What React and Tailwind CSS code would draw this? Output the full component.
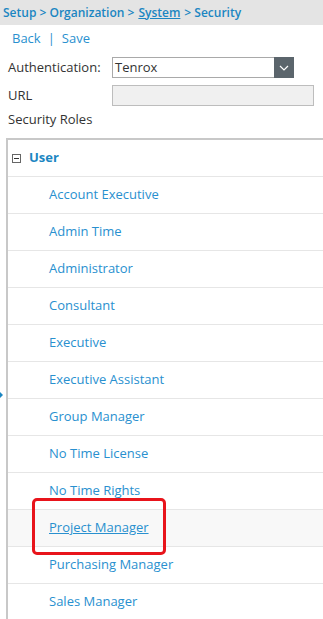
const roles = [
  'Account Executive',
  'Admin Time',
  'Administrator',
  'Consultant',
  'Executive',
  'Executive Assistant',
  'Group Manager',
  'No Time License',
  'No Time Rights',
  'Project Manager',
  'Purchasing Manager',
  'Sales Manager',
]

function RoleRow({ name }) {
  const active = name === 'Project Manager'
  return (
    <div
      className={`relative h-[37px] border-b border-[#e6e6e6] flex items-center pl-[41px] ${
        active ? 'bg-[#f8f8f8]' : 'bg-white'
      }`}
    >
      <span className={`text-[13px] text-[#2990cf] ${active ? 'underline' : ''}`}>{name}</span>
      {active && (
        <div className="absolute z-10 left-[24px] top-[-12px] w-[134px] h-[57px] border-[3px] border-[#e8141b] rounded-[5px]" />
      )}
    </div>
  )
}

export default function App() {
  return (
    <div className="relative w-full h-[619px] overflow-hidden bg-white font-['Open_Sans',sans-serif] text-[#333]">
      <div className="h-[25px] bg-[#e4e4e4] flex items-center px-[3px] text-[12px] font-semibold text-[#1b86c2]">
        Setup &gt; Organization &gt; <span className="underline mx-[4px]">System</span> &gt; Security
      </div>

      <div className="mt-[5px] h-[18px] flex items-center pl-[12px] text-[13px] text-[#2990cf]">
        <span>Back</span>
        <span className="mx-[7px]">|</span>
        <span>Save</span>
      </div>

      <div className="mt-[9px] flex items-center pl-2 text-[13px]">
        <span className="w-[104px]">Authentication:</span>
        <div className="w-[182px] h-[21px] border border-[#a9a9a9] flex items-center bg-white">
          <span className="flex-1 pl-[2px]">Tenrox</span>
          <div className="w-[20px] h-[21px] -mr-px bg-[#5b656c] flex items-center justify-center">
            <svg width="10" height="6" viewBox="0 0 10 6" fill="none">
              <path d="M1 1l4 4 4-4" stroke="#fff" strokeWidth="1.2" />
            </svg>
          </div>
        </div>
      </div>

      <div className="mt-[7px] flex items-center pl-2 text-[13px]">
        <span className="w-[104px]">URL</span>
        <div className="w-[202px] h-[21px] border border-[#bdbdbd] bg-[#f0f0f0]" />
      </div>

      <div className="h-[18px] mt-[5px] flex items-center pl-2 text-[13px]">Security Roles</div>

      <div className="mt-[9px] ml-[6px] border-l-2 border-t-2 border-[#c8c8c8]">
        <div className="h-[37px] border-b border-[#e6e6e6] flex items-center pl-[4px]">
          <div className="w-[9px] h-[9px] border border-[#666] flex items-center justify-center mr-[8px]">
            <div className="w-[5px] h-px bg-[#333]" />
          </div>
          <span className="text-[13px] font-bold text-[#1b86c2]">User</span>
        </div>
        {roles.map((r) => (
          <RoleRow key={r} name={r} />
        ))}
      </div>

      <div className="absolute left-0 top-[392px] w-0 h-0 border-y-[3px] border-y-transparent border-l-[3px] border-l-[#1b86c2]" />
    </div>
  )
}
